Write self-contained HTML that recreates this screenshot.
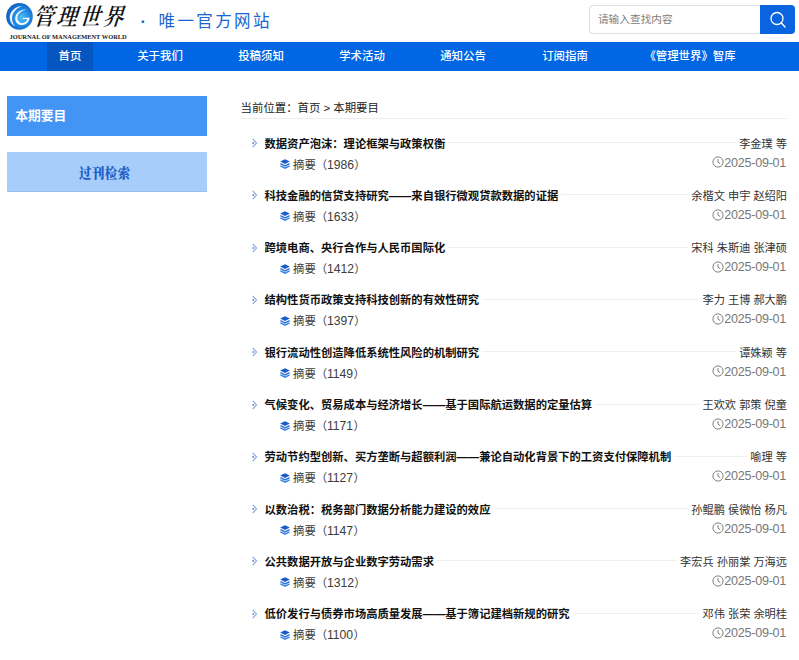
<!DOCTYPE html>
<html lang="zh-CN">
<head>
<meta charset="utf-8">
<title>管理世界 · 唯一官方网站</title>
<style>
*{box-sizing:border-box;margin:0;padding:0}
html,body{width:799px;height:660px;overflow:hidden;background:#fff}
body{font-family:"Liberation Sans","Noto Sans CJK SC",sans-serif;font-size:12px;color:#333;position:relative}
.abs{position:absolute}
/* header */
#logo{left:0;top:0;width:40px;height:34px}
#logotxt{left:33px;top:0.9px;font-family:"Liberation Serif","Noto Serif CJK SC",serif;font-weight:600;font-style:italic;font-size:20.5px;line-height:34px;color:#111;letter-spacing:2.8px;white-space:nowrap;transform:scaleY(1.15) skewX(-6deg);transform-origin:left 62%}
#logosub{left:9.5px;top:33.4px;font-family:"Liberation Serif",serif;font-weight:bold;font-size:6.42px;line-height:8px;color:#222;white-space:nowrap;letter-spacing:0}
#slogan{left:158.5px;top:8px;font-size:16.5px;line-height:26px;color:#1a66d2;white-space:nowrap;letter-spacing:2.4px}
#sdot{left:140.6px;top:8px;font-size:16.5px;line-height:26px;color:#1a66d2;font-weight:bold}
#search{left:589px;top:5px;width:172px;height:29px;border:1px solid #dcdfe6;border-right:none;border-radius:4px 0 0 4px;background:#fff}
#search span{position:absolute;left:7.9px;top:0;line-height:27px;font-size:10.7px;color:#808080}
#sbtn{left:759.6px;top:5px;width:35.4px;height:28.6px;background:#0a64e0;border-radius:0 4px 4px 0}
/* nav */
#nav{left:0;top:42.3px;width:799px;height:29.2px;background:#0066e4}
#nav a{position:absolute;top:0;height:29.2px;line-height:29.4px;color:#fff;font-size:11.4px;text-align:center;white-space:nowrap;text-decoration:none;font-weight:500}
#nav a.on{background:#0656c2}
/* sidebar */
#sb1{left:6.6px;top:96px;width:200.5px;height:39.6px;background:#4295f4;color:#fff;font-weight:bold;font-size:12.8px;line-height:40px;padding-left:8.6px}
#sb2{left:6.6px;top:152.2px;width:200.5px;height:39.6px;background:#a7cefb;border-bottom:1px solid #94c0f5;color:#2059c4;font-family:"Liberation Serif","Noto Serif CJK SC",serif;font-weight:900;font-size:12.4px;line-height:39px;text-align:center;letter-spacing:0.5px}
#sb2 span{display:inline-block;transform:translate(-2px,2.6px) scaleY(1.13)}
/* main */
#crumb{left:240.6px;top:98.6px;line-height:18px;font-size:11.4px;color:#222;white-space:nowrap}
#cline{left:241px;top:118px;width:546px;height:1px;background:#ededed}
.item{position:absolute;left:241px;width:547px;height:52px}
.item .ln{position:absolute;left:24px;right:0;top:14px;height:1px;background:#efefef}
.item .t{position:absolute;left:23.5px;top:6.5px;line-height:18px;font-size:11.3px;font-weight:bold;color:#111;white-space:nowrap;background:#fff;padding-right:3px}
.item .arr{position:absolute;left:9px;top:10px;width:9px;height:10px;background:#fff}
.item .au{position:absolute;right:1px;top:6.5px;line-height:18px;font-size:11.2px;color:#333;white-space:nowrap;background:#fff;padding-left:3px}
.item .ab{position:absolute;left:52px;top:27.5px;line-height:18px;font-size:11.4px;color:#3c3c3c;white-space:nowrap}
.item .ab i{font-style:normal;font-size:12.2px;letter-spacing:0;margin-left:-0.3px;margin-right:0.3px}
.item .lay{position:absolute;left:39.4px;top:31.1px;width:10px;height:10px}
.item .dt{position:absolute;right:1.9px;top:25.6px;line-height:18px;font-size:12.6px;color:#777;white-space:nowrap;letter-spacing:-0.26px}
.item .clk{position:absolute;right:63.8px;top:28.3px;width:12px;height:12px}
</style>
</head>
<body>
<!-- header -->
<svg id="logo" class="abs" viewBox="0 0 40 34">
  <defs>
    <radialGradient id="g1" cx="58%" cy="55%" r="62%"><stop offset="0" stop-color="#55c2f2"/><stop offset="0.5" stop-color="#1f88e2"/><stop offset="1" stop-color="#0e58bc"/></radialGradient>
  </defs>
  <circle cx="19.5" cy="16.4" r="13.3" fill="url(#g1)"/>
  <path d="M22.5 5.8 C14.5 6.6 9 12.4 9.8 18.8 C10.3 22.6 12.4 25 15.2 26.2 C12.4 23.2 11.4 19.6 12.4 15.8 C13.6 11.4 17.4 7.6 22.5 5.8 Z" fill="#fff" opacity="0.92"/>
  <path d="M27 9.2 C20.8 9 15.6 12.8 15.2 18 C14.9 22.4 18.2 25.4 22.4 25 C26.6 24.6 29.6 21.6 29.6 17.6 L23 17.9 L23.1 19.3 L27.2 19.1 C26.6 21.6 24.7 23 22.3 22.9 C19 22.7 17.1 20.1 17.4 17.2 C17.8 13.6 21.4 10.5 27 9.2 Z" fill="#fff" opacity="0.92"/>
</svg>
<div id="logotxt" class="abs">管理世界</div>
<div id="logosub" class="abs">JOURNAL OF MANAGEMENT WORLD</div>
<div id="sdot" class="abs">·</div><div id="slogan" class="abs">唯一官方网站</div>
<div id="search" class="abs"><span>请输入查找内容</span></div>
<div id="sbtn" class="abs"><svg width="35" height="29" viewBox="-1 0 35 29"><circle cx="16" cy="13.5" r="6" fill="none" stroke="#fff" stroke-width="1.3"/><path d="M20.4 18 L24 22" stroke="#fff" stroke-width="1.4" stroke-linecap="round"/></svg></div>
<!-- nav -->
<div id="nav" class="abs">
  <a class="on" style="left:47px;width:46px">首页</a>
  <a style="left:125px;width:70px">关于我们</a>
  <a style="left:226px;width:70px">投稿须知</a>
  <a style="left:327px;width:70px">学术活动</a>
  <a style="left:428px;width:70px">通知公告</a>
  <a style="left:530px;width:70px">订阅指南</a>
  <a style="left:631px;width:118px">《管理世界》智库</a>
</div>
<!-- sidebar -->
<div id="sb1" class="abs">本期要目</div>
<div id="sb2" class="abs"><span>过刊检索</span></div>
<!-- main -->
<div id="cline" class="abs"></div>
<div id="crumb" class="abs">当前位置：首页 &gt; 本期要目</div>

<svg width="0" height="0" style="position:absolute">
  <defs>
    <symbol id="i-arr" viewBox="0 0 9 10"><path d="M2.7 0.9 L6.5 5 L2.7 9.1" fill="none" stroke="#7fa4de" stroke-width="1.1"/><circle cx="3.3" cy="5" r="0.9" fill="#5c86c8"/></symbol>
    <symbol id="i-lay" viewBox="0 0 10 10"><path d="M5 0.2 L9.8 2.6 L5 5 L0.2 2.6 Z" fill="#1a5cc8"/><path d="M0.4 4.6 L5 6.9 L9.6 4.6" fill="none" stroke="#2a72dc" stroke-width="1.3"/><path d="M0.4 6.9 L5 9.2 L9.6 6.9" fill="none" stroke="#3880e2" stroke-width="1.3"/></symbol>
    <symbol id="i-clk" viewBox="0 0 12 12"><circle cx="6" cy="6" r="5.1" fill="none" stroke="#808080" stroke-width="1"/><path d="M6 3 V6.2 L8.2 7.6" fill="none" stroke="#808080" stroke-width="1"/></symbol>
  </defs>
</svg>

<div class="item" style="top:128px"><div class="ln"></div><svg class="arr"><use href="#i-arr"/></svg><div class="t">数据资产泡沫：理论框架与政策权衡</div><div class="au">李金璞 等</div><svg class="lay"><use href="#i-lay"/></svg><div class="ab">摘要（<i>1986</i>）</div><svg class="clk"><use href="#i-clk"/></svg><div class="dt">2025-09-01</div></div>
<div class="item" style="top:180.3px"><div class="ln"></div><svg class="arr"><use href="#i-arr"/></svg><div class="t">科技金融的信贷支持研究——来自银行微观贷款数据的证据</div><div class="au">余楷文 申宇 赵绍阳</div><svg class="lay"><use href="#i-lay"/></svg><div class="ab">摘要（<i>1633</i>）</div><svg class="clk"><use href="#i-clk"/></svg><div class="dt">2025-09-01</div></div>
<div class="item" style="top:232.6px"><div class="ln"></div><svg class="arr"><use href="#i-arr"/></svg><div class="t">跨境电商、央行合作与人民币国际化</div><div class="au">宋科 朱斯迪 张津硕</div><svg class="lay"><use href="#i-lay"/></svg><div class="ab">摘要（<i>1412</i>）</div><svg class="clk"><use href="#i-clk"/></svg><div class="dt">2025-09-01</div></div>
<div class="item" style="top:284.9px"><div class="ln"></div><svg class="arr"><use href="#i-arr"/></svg><div class="t">结构性货币政策支持科技创新的有效性研究</div><div class="au">李力 王博 郝大鹏</div><svg class="lay"><use href="#i-lay"/></svg><div class="ab">摘要（<i>1397</i>）</div><svg class="clk"><use href="#i-clk"/></svg><div class="dt">2025-09-01</div></div>
<div class="item" style="top:337.2px"><div class="ln"></div><svg class="arr"><use href="#i-arr"/></svg><div class="t">银行流动性创造降低系统性风险的机制研究</div><div class="au">谭姝颖 等</div><svg class="lay"><use href="#i-lay"/></svg><div class="ab">摘要（<i>1149</i>）</div><svg class="clk"><use href="#i-clk"/></svg><div class="dt">2025-09-01</div></div>
<div class="item" style="top:389.5px"><div class="ln"></div><svg class="arr"><use href="#i-arr"/></svg><div class="t">气候变化、贸易成本与经济增长——基于国际航运数据的定量估算</div><div class="au">王欢欢 郭策 倪童</div><svg class="lay"><use href="#i-lay"/></svg><div class="ab">摘要（<i>1171</i>）</div><svg class="clk"><use href="#i-clk"/></svg><div class="dt">2025-09-01</div></div>
<div class="item" style="top:441.8px"><div class="ln"></div><svg class="arr"><use href="#i-arr"/></svg><div class="t">劳动节约型创新、买方垄断与超额利润——兼论自动化背景下的工资支付保障机制</div><div class="au">喻理 等</div><svg class="lay"><use href="#i-lay"/></svg><div class="ab">摘要（<i>1127</i>）</div><svg class="clk"><use href="#i-clk"/></svg><div class="dt">2025-09-01</div></div>
<div class="item" style="top:494.1px"><div class="ln"></div><svg class="arr"><use href="#i-arr"/></svg><div class="t">以数治税：税务部门数据分析能力建设的效应</div><div class="au">孙鲲鹏 侯微怡 杨凡</div><svg class="lay"><use href="#i-lay"/></svg><div class="ab">摘要（<i>1147</i>）</div><svg class="clk"><use href="#i-clk"/></svg><div class="dt">2025-09-01</div></div>
<div class="item" style="top:546.4px"><div class="ln"></div><svg class="arr"><use href="#i-arr"/></svg><div class="t">公共数据开放与企业数字劳动需求</div><div class="au">李宏兵 孙丽棠 万海远</div><svg class="lay"><use href="#i-lay"/></svg><div class="ab">摘要（<i>1312</i>）</div><svg class="clk"><use href="#i-clk"/></svg><div class="dt">2025-09-01</div></div>
<div class="item" style="top:598.7px"><div class="ln"></div><svg class="arr"><use href="#i-arr"/></svg><div class="t">低价发行与债券市场高质量发展——基于簿记建档新规的研究</div><div class="au">邓伟 张荣 余明桂</div><svg class="lay"><use href="#i-lay"/></svg><div class="ab">摘要（<i>1100</i>）</div><svg class="clk"><use href="#i-clk"/></svg><div class="dt">2025-09-01</div></div>
</body>
</html>
